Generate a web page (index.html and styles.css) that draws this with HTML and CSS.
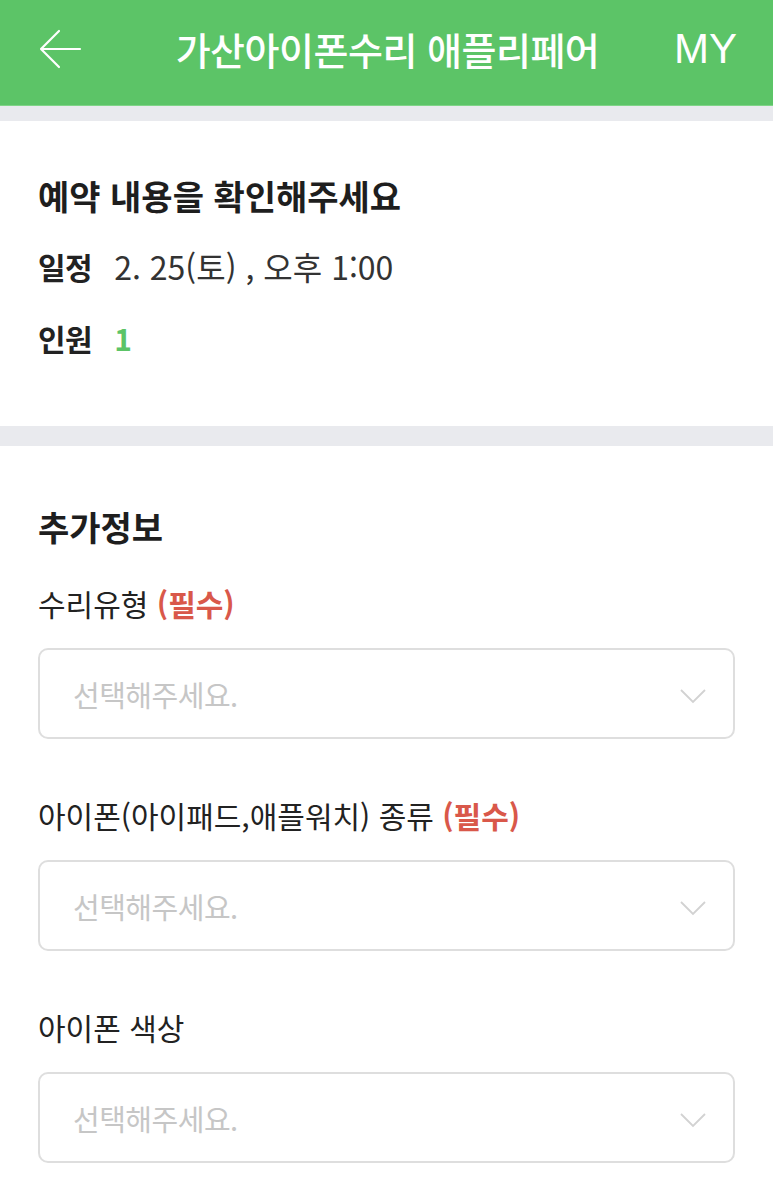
FILE: index.html
```html
<!DOCTYPE html>
<html lang="ko">
<head>
<meta charset="utf-8">
<link rel="stylesheet" href="styles.css">
</head>
<body>
<header class="topbar">
  <button class="back" aria-label="뒤로">
    <svg width="44" height="40" viewBox="0 0 44 40"><path d="M42 20H3M21 2L3 20l18 18" fill="none" stroke="#fff" stroke-width="2.2" stroke-linecap="round" stroke-linejoin="round"/></svg>
  </button>
  <h1 class="title">가산아이폰수리 애플리페어</h1>
  <span class="my">MY</span>
</header>
<div class="gap gap-top"></div>
<section class="card confirm">
  <h2 class="heading">예약 내용을 확인해주세요</h2>
  <div class="row"><span class="key">일정</span><span class="val">2. 25(토) , 오후 1:00</span></div>
  <div class="row"><span class="key">인원</span><span class="val num">1</span></div>
</section>
<div class="gap gap-mid"></div>
<section class="card extra">
  <h2 class="heading">추가정보</h2>
  <div class="field">
    <div class="label">수리유형 <span class="req">(필수)</span></div>
    <div class="select"><span class="ph">선택해주세요.</span><svg class="chev" width="28" height="16" viewBox="0 0 28 16"><path d="M2 2l12 12L26 2" fill="none" stroke="#d2d2d2" stroke-width="1.8"/></svg></div>
  </div>
  <div class="field">
    <div class="label">아이폰(아이패드,애플워치) 종류 <span class="req">(필수)</span></div>
    <div class="select"><span class="ph">선택해주세요.</span><svg class="chev" width="28" height="16" viewBox="0 0 28 16"><path d="M2 2l12 12L26 2" fill="none" stroke="#d2d2d2" stroke-width="1.8"/></svg></div>
  </div>
  <div class="field">
    <div class="label">아이폰 색상</div>
    <div class="select"><span class="ph">선택해주세요.</span><svg class="chev" width="28" height="16" viewBox="0 0 28 16"><path d="M2 2l12 12L26 2" fill="none" stroke="#d2d2d2" stroke-width="1.8"/></svg></div>
  </div>
</section>
</body>
</html>
```
FILE: styles.css
```css
* { box-sizing: border-box; }
html, body { margin: 0; padding: 0; background: #fff; }
body {
  font-family: "Noto Sans CJK KR", "Noto Sans", sans-serif;
  color: #222;
  overflow: hidden;
}
.topbar {
  height: 106px;
  background: #5cc467;
  border-bottom: 1px solid #7fd487;
  display: flex;
  align-items: center;
  padding: 0 38px 8px 38px;
  color: #fff;
}
.back {
  background: none;
  border: 0;
  padding: 0;
  width: 80px;
  height: 40px;
  display: flex;
  justify-content: flex-start;
}
.title {
  flex: 1;
  margin: 0;
  text-align: center;
  font-size: 38px;
  font-weight: 500;
  letter-spacing: -0.5px;
  line-height: 50px;
  white-space: nowrap;
}
.my {
  width: 80px;
  text-align: right;
  font-family: "Liberation Sans", Arial, sans-serif;
  font-size: 42px;
  font-weight: 400;
  margin-right: -2px;
}
.gap { background: #e9eaee; }
.gap-top { height: 15px; }
.gap-mid { height: 20px; }
.card { padding: 0 38px; }
.confirm { height: 305px; padding-top: 52px; }
.heading {
  margin: 0;
  font-size: 34px;
  font-weight: 700;
  line-height: 46px;
  color: #1e1e1e;
}
.row {
  display: flex;
  align-items: center;
  gap: 22px;
  margin-top: 26px;
  line-height: 46px;
  font-size: 30px;
}
.confirm .heading + .row { margin-top: 24px; }
.key { font-weight: 700; color: #222; letter-spacing: -0.5px; }
.val { color: #333; font-weight: 400; font-size: 32px; }
.num { color: #5cc467; font-weight: 700; font-size: 30px; }
.extra { padding-top: 58px; }
.field { margin-top: 33px; }
.field + .field { margin-top: 56px; }
.label {
  font-size: 30px;
  line-height: 40px;
  color: #222;
}
.req { color: #d9584a; font-weight: 700; }
.select {
  margin-top: 25px;
  height: 91px;
  border: 2px solid #dedede;
  border-radius: 10px;
  display: flex;
  align-items: center;
  justify-content: space-between;
  padding: 0 26px 0 33px;
}
.ph { color: #c6c6c6; font-size: 29px; letter-spacing: -0.5px; }
.chev { display: block; margin-top: 4px; }
```
